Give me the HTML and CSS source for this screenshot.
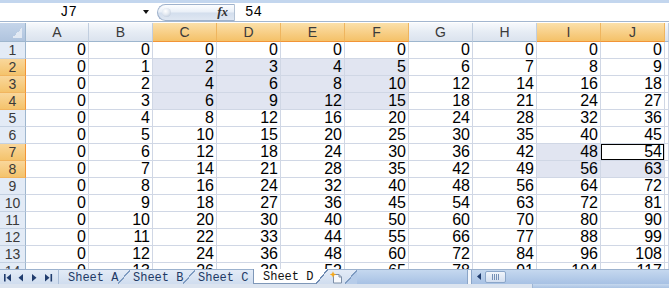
FILE: index.html
```html
<!DOCTYPE html>
<html>
<head>
<meta charset="utf-8">
<link rel="stylesheet" href="styles.css">
</head>
<body>
<div class="app">
  <div class="fbar">
    <div class="namebox"><span class="name">J7</span><span class="dd"></span></div>
    <div class="capsule"><span class="knob"></span><span class="fx">fx</span></div>
    <div class="fval">54</div>
  </div>
  <div class="grid">
    <div class="corner"></div>
    <div class="ch">A</div><div class="ch">B</div><div class="ch sel">C</div><div class="ch sel">D</div><div class="ch sel">E</div><div class="ch sel">F</div><div class="ch">G</div><div class="ch">H</div><div class="ch sel">I</div><div class="ch sel">J</div><div class="ch"></div>

    <div class="rh">1</div><div class="c">0</div><div class="c">0</div><div class="c">0</div><div class="c">0</div><div class="c">0</div><div class="c">0</div><div class="c">0</div><div class="c">0</div><div class="c">0</div><div class="c">0</div><div class="c"></div>
    <div class="rh sel">2</div><div class="c">0</div><div class="c">1</div><div class="c hl">2</div><div class="c hl">3</div><div class="c hl">4</div><div class="c hl">5</div><div class="c">6</div><div class="c">7</div><div class="c">8</div><div class="c">9</div><div class="c"></div>
    <div class="rh sel">3</div><div class="c">0</div><div class="c">2</div><div class="c hl">4</div><div class="c hl">6</div><div class="c hl">8</div><div class="c hl">10</div><div class="c">12</div><div class="c">14</div><div class="c">16</div><div class="c">18</div><div class="c"></div>
    <div class="rh sel">4</div><div class="c">0</div><div class="c">3</div><div class="c hl">6</div><div class="c hl">9</div><div class="c hl">12</div><div class="c hl">15</div><div class="c">18</div><div class="c">21</div><div class="c">24</div><div class="c">27</div><div class="c"></div>
    <div class="rh">5</div><div class="c">0</div><div class="c">4</div><div class="c">8</div><div class="c">12</div><div class="c">16</div><div class="c">20</div><div class="c">24</div><div class="c">28</div><div class="c">32</div><div class="c">36</div><div class="c"></div>
    <div class="rh">6</div><div class="c">0</div><div class="c">5</div><div class="c">10</div><div class="c">15</div><div class="c">20</div><div class="c">25</div><div class="c">30</div><div class="c">35</div><div class="c">40</div><div class="c">45</div><div class="c"></div>
    <div class="rh sel">7</div><div class="c">0</div><div class="c">6</div><div class="c">12</div><div class="c">18</div><div class="c">24</div><div class="c">30</div><div class="c">36</div><div class="c">42</div><div class="c hl">48</div><div class="c act">54</div><div class="c"></div>
    <div class="rh sel">8</div><div class="c">0</div><div class="c">7</div><div class="c">14</div><div class="c">21</div><div class="c">28</div><div class="c">35</div><div class="c">42</div><div class="c">49</div><div class="c hl">56</div><div class="c hl">63</div><div class="c"></div>
    <div class="rh">9</div><div class="c">0</div><div class="c">8</div><div class="c">16</div><div class="c">24</div><div class="c">32</div><div class="c">40</div><div class="c">48</div><div class="c">56</div><div class="c">64</div><div class="c">72</div><div class="c"></div>
    <div class="rh">10</div><div class="c">0</div><div class="c">9</div><div class="c">18</div><div class="c">27</div><div class="c">36</div><div class="c">45</div><div class="c">54</div><div class="c">63</div><div class="c">72</div><div class="c">81</div><div class="c"></div>
    <div class="rh">11</div><div class="c">0</div><div class="c">10</div><div class="c">20</div><div class="c">30</div><div class="c">40</div><div class="c">50</div><div class="c">60</div><div class="c">70</div><div class="c">80</div><div class="c">90</div><div class="c"></div>
    <div class="rh">12</div><div class="c">0</div><div class="c">11</div><div class="c">22</div><div class="c">33</div><div class="c">44</div><div class="c">55</div><div class="c">66</div><div class="c">77</div><div class="c">88</div><div class="c">99</div><div class="c"></div>
    <div class="rh">13</div><div class="c">0</div><div class="c">12</div><div class="c">24</div><div class="c">36</div><div class="c">48</div><div class="c">60</div><div class="c">72</div><div class="c">84</div><div class="c">96</div><div class="c">108</div><div class="c"></div>
    <div class="rh">14</div><div class="c">0</div><div class="c">13</div><div class="c">26</div><div class="c">39</div><div class="c">52</div><div class="c">65</div><div class="c">78</div><div class="c">91</div><div class="c">104</div><div class="c">117</div><div class="c"></div>
  </div>
  <div class="tabbar">
    <div class="nav">
      <svg width="58" height="14" viewBox="0 0 58 14">
        <rect x="4" y="4" width="1.6" height="7.5" fill="#203c6e"/>
        <polygon points="11,4 6.5,7.75 11,11.5" fill="#203c6e"/>
        <polygon points="23,4 18.5,7.75 23,11.5" fill="#203c6e"/>
        <polygon points="32,4 36.5,7.75 32,11.5" fill="#203c6e"/>
        <polygon points="45,4 49.5,7.75 45,11.5" fill="#203c6e"/>
        <rect x="50.5" y="4" width="1.6" height="7.5" fill="#203c6e"/>
      </svg>
    </div>
    <div class="tab ta"><span class="lbl">Sheet A</span><span class="sl"></span></div>
    <div class="tab tb"><span class="lbl">Sheet B</span><span class="sl"></span></div>
    <div class="tab tc"><span class="lbl">Sheet C</span></div>
    <div class="tab td"><span class="lbl">Sheet D</span><span class="sl"></span></div>
    <div class="tab tn"><span class="lbl">
      <svg width="15" height="13" viewBox="0 0 15 13">
        <path d="M4.5 3.5h5.5l2.5 2.5v6h-8z" fill="#f7f9fc" stroke="#7d8fa8"/>
        <path d="M10 3.5v2.5h2.5" fill="none" stroke="#7d8fa8"/>
        <path d="M4 0.3l.9 2.3 2.3.9-2.3.9-.9 2.3-.9-2.3-2.3-.9 2.3-.9z" fill="#f4a81c"/>
      </svg>
    </span><span class="sl"></span></div>
    <div class="rest">
      <span class="spacer"></span>
      <span class="split"></span>
      <span class="larr"><svg width="12" height="14" viewBox="0 0 12 14"><polygon points="9,4 5,7.5 9,11" fill="#203c6e"/></svg></span>
      <span class="thumb"></span>
      <span class="track"></span>
    </div>
  </div>
  <div class="status"><span class="sl-left"></span><span class="sl-right"></span></div>
</div>
</body>
</html>
```

FILE: styles.css
```css
html, body {
  margin: 0;
  padding: 0;
}
body {
  width: 669px;
  height: 288px;
  overflow: hidden;
  background: #ffffff;
  font-family: "Liberation Sans", Arial, sans-serif;
}
.app {
  display: flex;
  flex-direction: column;
  height: 288px;
}

/* formula bar */
.fbar {
  flex: none;
  height: 22px;
  box-sizing: border-box;
  border-top: 3px solid #c3d6ee;
  border-bottom: 1px solid #a3b6cf;
  margin-bottom: 1px;
  display: flex;
  align-items: center;
  font-family: "Liberation Mono", monospace;
  font-size: 14px;
  color: #000;
}
.namebox {
  width: 150px;
  display: flex;
  align-items: center;
}
.name {
  width: 137px;
  text-align: center;
}
.dd {
  margin-left: 6px;
  width: 0;
  height: 0;
  border-left: 3px solid transparent;
  border-right: 3px solid transparent;
  border-top: 4px solid #111;
}
.capsule {
  margin-left: 7px;
  width: 78px;
  height: 17px;
  box-sizing: border-box;
  border: 1px solid #9fb2cc;
  border-right-color: #b4c2d4;
  border-radius: 9px 0 0 9px;
  background: linear-gradient(#fdfeff 0%, #e9eff7 48%, #d3deed 52%, #dfe7f2 100%);
  display: flex;
  align-items: center;
}
.knob {
  margin-left: 4px;
  width: 9px;
  height: 9px;
  border-radius: 50%;
  background: radial-gradient(circle at 40% 35%, #ffffff 0%, #e3e9f1 45%, #aebdd2 100%);
}
.fx {
  margin-left: auto;
  margin-right: 6px;
  font-family: "Liberation Serif", serif;
  font-style: italic;
  font-weight: bold;
  font-size: 13px;
  color: #333;
}
.fval {
  padding-left: 10px;
}

/* sheet grid */
.grid {
  flex: none;
  height: 246px;
  overflow: hidden;
  display: grid;
  grid-template-columns: 26px 63px repeat(9, 64px) 1fr;
  grid-template-rows: 19px repeat(14, 17px);
}
.grid > div {
  box-sizing: border-box;
  overflow: hidden;
  white-space: nowrap;
}
.corner {
  border-right: 1px solid #9eb6ce;
  border-bottom: 1px solid #9eb6ce;
  background:
    linear-gradient(to bottom right, transparent 50%, #e2e9f3 50%) right 3px bottom 3px / 10px 10px no-repeat,
    linear-gradient(#c5d5ea, #b0c4de);
}
.ch {
  background: linear-gradient(#f7f9fc, #e6ecf4 50%, #dbe3ee);
  border-right: 1px solid #c1cedf;
  border-bottom: 1px solid #9eb6ce;
  font-size: 14px;
  line-height: 18px;
  text-align: center;
  color: #3a3a3a;
}
.ch.sel {
  background: linear-gradient(#fbe0aa, #f8d089 50%, #f4c168);
  border-right-color: #efb55e;
  border-bottom-color: #f29436;
}
.rh {
  background: #e3ebf6;
  border-right: 1px solid #9eb6ce;
  border-bottom: 1px solid #c4d1e2;
  font-size: 14px;
  line-height: 16px;
  text-align: center;
  color: #3a3a3a;
}
.rh.sel {
  background: linear-gradient(#f9d79b, #f4c36c);
  border-right-color: #f29436;
  border-bottom-color: #f1b55f;
}
.c {
  border-right: 1px solid #d0d7e5;
  border-bottom: 1px solid #d0d7e5;
  font-size: 16px;
  line-height: 16px;
  text-align: right;
  padding-right: 2px;
  color: #000;
}
.c.hl {
  background: #e1e5f1;
}
.c.act {
  background: #ffffff;
  box-shadow: inset 0 0 0 1px #000;
}

/* sheet tabs */
.tabbar {
  flex: none;
  height: 15px;
  display: flex;
  background: linear-gradient(#e4ecf7, #d0ddef);
  font-family: "Liberation Mono", monospace;
  font-size: 12px;
  color: #1e3a66;
}
.nav {
  width: 59px;
  height: 15px;
  box-sizing: border-box;
  border-top: 1px solid #9cb2ce;
  border-right: 1px solid #a9bcd6;
}
.nav svg {
  display: block;
}
.tab {
  display: flex;
}
.lbl {
  height: 15px;
  box-sizing: border-box;
  border-top: 1px solid #9cb2ce;
  padding-top: 1px;
  line-height: 14px;
  white-space: nowrap;
  overflow: visible;
}
.sl {
  width: 12px;
  height: 15px;
  box-sizing: border-box;
  border-top: 1px solid #9cb2ce;
  background: linear-gradient(to bottom right, transparent calc(50% - 0.6px), #7e9bc1 calc(50% - 0.6px), #7e9bc1 calc(50% + 0.6px), transparent calc(50% + 0.6px));
}
.ta .lbl { width: 59px; padding-left: 9px; }
.tb .lbl { width: 53px; padding-left: 3px; }
.tc .lbl { width: 58px; padding-left: 3px; }
.td .lbl {
  width: 63px;
  padding-left: 9px;
  padding-top: 2px;
  background: #ffffff;
  border-top: none;
  border-left: 1px solid #7e97b8;
  border-bottom: 1px solid #7e97b8;
  line-height: 12px;
  color: #111;
}
.td .sl {
  border-top: none;
  background: linear-gradient(to bottom right, #ffffff calc(50% - 0.6px), #6f8bb2 calc(50% - 0.6px), #6f8bb2 calc(50% + 0.6px), transparent calc(50% + 0.6px));
}
.tn .lbl {
  width: 17px;
  padding-left: 1px;
  padding-top: 0;
  display: flex;
  align-items: center;
}
.tn .lbl svg {
  display: block;
}
.tn .sl {
  background: linear-gradient(to bottom right, transparent calc(50% - 0.6px), #7e9bc1 calc(50% - 0.6px), #7e9bc1 calc(50% + 0.6px), #b6cce9 calc(50% + 0.6px));
}
.rest {
  flex: 1;
  display: flex;
  height: 15px;
  box-sizing: border-box;
  border-top: 1px solid #9cb2ce;
  background: linear-gradient(#c5d8ef, #a7c1e4);
}
.spacer {
  width: 110px;
}
.split {
  width: 5px;
  box-sizing: border-box;
  background: #f3f6fb;
  border-left: 1px solid #8aa5c8;
  border-right: 1px solid #8aa5c8;
}
.larr {
  width: 12px;
}
.larr svg {
  display: block;
  margin-top: -1px;
}
.thumb {
  width: 21px;
  margin: 1px 0 1px 1px;
  box-sizing: border-box;
  border: 1px solid #8ba6c9;
  border-radius: 2px;
  background:
    repeating-linear-gradient(90deg, #7590b6 0 1px, transparent 1px 2px) center / 7px 6px no-repeat,
    linear-gradient(#f1f5fb, #d2def0);
}
.track {
  flex: 1;
}
.status {
  flex: none;
  height: 4px;
  display: flex;
}
.sl-left {
  flex: 1;
  background: #dce4ef;
}
.sl-right {
  width: 137px;
  box-sizing: border-box;
  border-left: 1px solid #9fb6d4;
  background: linear-gradient(#c6d8ee, #aac3e3);
}
```
